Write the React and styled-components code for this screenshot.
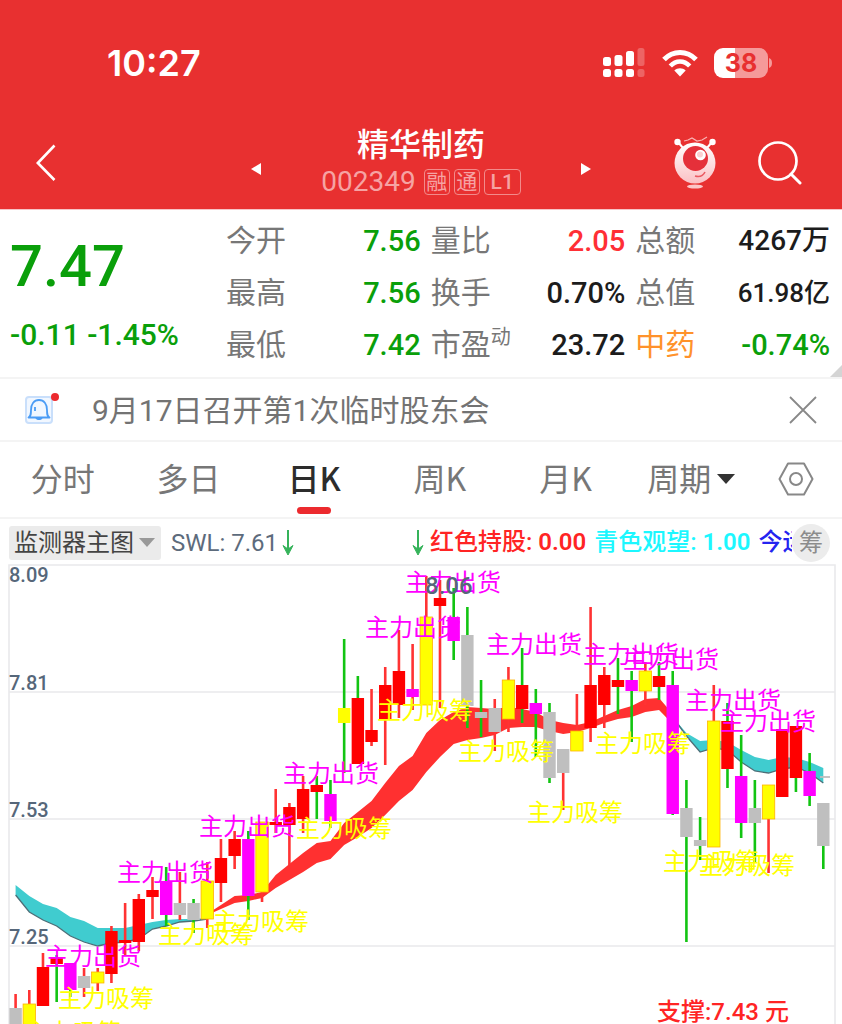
import React from "react";
import styled, { createGlobalStyle } from "styled-components";

const RED = "#ff0000";
const GREEN = "#12c412";
const YELLOW = "#ffff00";
const PINK = "#ff00ff";
const GREY = "#bfbfbf";
const UP = "#ff3333";

const STEP = 13.69;
const xAt = (i) => 15.6 + i * STEP;

// [body colour, body top, body bottom, wick top, wick bottom, wick colour]
const candles = [
  [GREY, 1008, 1030, 994, 1030, UP],
  [YELLOW, 1004, 1030, 990, 1030, UP],
  [RED, 967, 1006, 953, 1006, UP],
  [RED, 958, 964, 955, 1002, GREEN],
  [PINK, 963, 990, 963, 997, GREEN],
  [GREY, 976, 988, 968, 997, UP],
  [YELLOW, 972, 983, 968, 991, UP],
  [RED, 931, 974, 926, 983, UP],
  [RED, 940, 943, 903, 955, UP],
  [RED, 899, 942, 894, 951, UP],
  [RED, 890, 897, 877, 919, UP],
  [PINK, 881, 915, 867, 926, GREEN],
  [GREY, 903, 915, 872, 920, UP],
  [GREY, 903, 920, 899, 933, GREEN],
  [YELLOW, 881, 919, 862, 928, UP],
  [RED, 858, 883, 839, 902, UP],
  [RED, 839, 856, 831, 869, UP],
  [PINK, 839, 896, 831, 920, GREEN],
  [YELLOW, 822, 892, 822, 902, UP],
  [RED, 822, 825, 789, 833, UP],
  [RED, 807, 825, 803, 865, UP],
  [RED, 789, 819, 776, 833, UP],
  [RED, 785, 792, 776, 819, GREEN],
  [PINK, 794, 821, 780, 828, GREEN],
  [YELLOW, 708, 723, 639, 773, GREEN],
  [RED, 698, 764, 676, 764, GREEN],
  [RED, 730, 742, 689, 746, UP],
  [RED, 685, 719, 667, 765, UP],
  [RED, 671, 705, 630, 718, UP],
  [PINK, 689, 697, 644, 710, UP],
  [YELLOW, 617, 705, 576, 705, UP],
  [RED, 598, 606, 580, 708, UP],
  [PINK, 617, 641, 588, 660, GREEN],
  [GREY, 635, 706, 607, 728, GREEN],
  [GREY, 712, 718, 680, 737, GREEN],
  [GREY, 708, 732, 699, 751, UP],
  [YELLOW, 680, 719, 667, 732, UP],
  [RED, 685, 709, 648, 723, GREEN],
  [PINK, 703, 714, 689, 757, GREEN],
  [GREY, 712, 778, 703, 783, GREEN],
  [GREY, 749, 773, 749, 810, UP],
  [YELLOW, 731, 751, 694, 751, UP],
  [RED, 685, 728, 607, 742, UP],
  [RED, 675, 705, 667, 728, UP],
  [RED, 680, 687, 658, 714, GREEN],
  [PINK, 680, 691, 671, 742, GREEN],
  [YELLOW, 671, 691, 662, 705, UP],
  [RED, 676, 687, 662, 700, GREEN],
  [PINK, 685, 814, 671, 815, GREEN],
  [GREY, 808, 837, 780, 942, GREEN],
  [GREY, 840, 846, 817, 860, GREEN],
  [YELLOW, 721, 847, 685, 847, UP],
  [RED, 721, 769, 703, 788, GREEN],
  [PINK, 776, 823, 735, 838, GREEN],
  [GREY, 808, 823, 780, 862, GREEN],
  [YELLOW, 785, 819, 785, 873, UP],
  [RED, 729, 797, 729, 797, UP],
  [RED, 726, 778, 726, 792, GREEN],
  [PINK, 771, 796, 753, 806, GREEN],
  [GREY, 803, 846, 803, 869, GREEN],
];

// moving average bands: first candle index, then upper and lower edges
const bands = [
  {
    start: 0,
    color: "#40cccf",
    edge: "#4d6f78",
    top: [885, 896, 904, 908, 917, 921, 928, 928, 928, 925, 922, 920, 919, 919, 918],
    bottom: [895, 912, 920, 926, 936, 942, 946, 943, 942, 939, 929, 926, 922, 921, 919],
  },
  {
    start: 14,
    color: "#ff3030",
    top: [
      914, 905, 896, 895, 892, 875, 864, 853, 843, 841, 823, 812, 801, 783, 766, 756, 733, 720,
      712, 707, 708, 709, 707, 709, 712, 720, 723, 725, 722, 716, 710, 706, 699, 698, 714,
    ],
    bottom: [
      915, 909, 903, 901, 898, 888, 880, 872, 863, 859, 845, 837, 828, 815, 801, 790, 772, 757,
      744, 740, 738, 735, 728, 727, 727, 731, 734, 732, 728, 723, 719, 717, 712, 710, 724,
    ],
  },
  {
    start: 48,
    color: "#40cccf",
    edge: "#4d6f78",
    top: [717, 733, 741, 740, 742, 750, 757, 760, 757, 758, 762, 768],
    bottom: [717, 736, 752, 748, 750, 762, 771, 773, 769, 767, 773, 783],
  },
];

const sellMarks = [
  [405, 591], [365, 636], [486, 653], [583, 663], [623, 668], [685, 709],
  [720, 730], [283, 782], [199, 835], [117, 881], [45, 965],
];

const buyMarks = [
  [377, 719], [458, 760], [595, 752], [527, 821], [296, 837], [663, 870],
  [699, 874], [213, 930], [158, 943], [58, 1007], [25, 1041],
];

const levels = [
  ["8.09", 582],
  ["7.81", 690],
  ["7.53", 817],
  ["7.25", 944],
];

const quotes = [
  { label: "今开", value: "7.56", color: "#0a9f0a" },
  { label: "量比", value: "2.05", color: "#ff2f35" },
  { label: "总额", value: "4267万", size: 28 },
  { label: "最高", value: "7.56", color: "#0a9f0a" },
  { label: "换手", value: "0.70%" },
  { label: "总值", value: "61.98亿", size: 26 },
  { label: "最低", value: "7.42", color: "#0a9f0a" },
  { label: "市盈", note: "动", value: "23.72" },
  { label: "中药", labelColor: "#ff922b", value: "-0.74%", color: "#0a9f0a" },
];

const tabs = ["分时", "多日", "日K", "周K", "月K"];

const points = (list, start) => list.map((y, i) => `${xAt(start + i)},${y}`);

const Band = ({ start, color, edge, top, bottom }) => (
  <g>
    <polygon
      points={[...points(top, start), ...points(bottom, start).reverse()].join(" ")}
      fill={color}
    />
    {edge && (
      <polyline points={points(bottom, start).join(" ")} fill="none" stroke={edge} strokeWidth="1.3" />
    )}
  </g>
);

const Candle = ({ index, data }) => {
  const [fill, top, bottom, high, low, wick] = data;
  const x = xAt(index);
  return (
    <g>
      <line x1={x} x2={x} y1={high} y2={low} stroke={wick} strokeWidth="2.6" />
      <rect x={x - 6.2} y={top} width="12.4" height={bottom - top} fill={fill} />
      {fill === YELLOW && wick === UP && (
        <rect x={x - 6.2} y={top} width="12.4" height={bottom - top} fill="none" stroke="#ffb300" strokeWidth="0.8" />
      )}
    </g>
  );
};

const Chart = () => (
  <ChartSvg viewBox="0 564 842 460" role="img" aria-label="日K">
    <path d="M9 1030V565H835V1030M9 692H835M9 819H835M9 946H835" fill="none" stroke="#e9e9ec" strokeWidth="1.6" />
    {bands.map((band) => (
      <Band key={band.start} {...band} />
    ))}
    {candles.map((data, i) => (
      <Candle key={i} index={i} data={data} />
    ))}
    <path d="M820 777H830" stroke={GREY} strokeWidth="1.8" />
    {levels.map(([text, y]) => (
      <AxisText key={text} x="9" y={y}>{text}</AxisText>
    ))}
    {sellMarks.map(([x, y]) => (
      <Mark key={x} x={x} y={y} fill={PINK}>主力出货</Mark>
    ))}
    {buyMarks.map(([x, y]) => (
      <Mark key={x} x={x} y={y} fill={YELLOW}>主力吸筹</Mark>
    ))}
    <PeakText x="425" y="594">8.06</PeakText>
    <Support x="657" y="1020">支撑:7.43 元</Support>
  </ChartSvg>
);

const Arrow = () => (
  <svg width="12" height="26" viewBox="0 0 12 26">
    <path d="M6 0V20" stroke="#35b35a" strokeWidth="2" />
    <path d="M1 15.5L6 25L11 15.5L6 19Z" fill="#35b35a" stroke="#35b35a" />
  </svg>
);

const App = () => {
  return (
    <Page>
      <GlobalStyle />
      <Header>
        <StatusBar>
          <Clock>10:27</Clock>
          <StatusIcons>
            <svg width="43" height="30" viewBox="0 0 43 30">
              <g fill="#fff">
                <rect x="0" y="9" width="8" height="9" rx="2.5" />
                <rect x="11.5" y="7" width="8" height="11" rx="2.5" />
                <rect x="23" y="3" width="8" height="15" rx="2.5" />
                <rect x="0" y="21" width="8" height="8" rx="2.5" />
                <rect x="11.5" y="21" width="8" height="8" rx="2.5" />
                <rect x="23" y="21" width="8" height="8" rx="2.5" />
              </g>
              <g fill="#fff" opacity=".25">
                <rect x="34.5" y="0" width="7" height="18" rx="2.5" />
                <rect x="34.5" y="21" width="7" height="8" rx="2.5" />
              </g>
            </svg>
            <svg width="36" height="28" viewBox="0 0 36 28">
              <path d="M2 10.5C11 1 25 1 34 10.5" fill="none" stroke="#fff" strokeWidth="5" />
              <path d="M8.3 17C14 11 22 11 27.7 17" fill="none" stroke="#fff" strokeWidth="4.6" />
              <path d="M12.3 21.5C15.5 18.4 20.5 18.4 23.7 21.5L18 27.4Z" fill="#fff" />
            </svg>
            <Battery>
              <Charge>38</Charge>
              <svg width="4" height="10" viewBox="0 0 4 10">
                <path d="M0 0C4 1 4 9 0 10Z" fill="#f59a9a" />
              </svg>
            </Battery>
          </StatusIcons>
        </StatusBar>
        <NavBar>
          <IconButton aria-label="返回">
            <svg width="20" height="38" viewBox="0 0 20 38">
              <path d="M18.5 1.5L1.8 19L18.5 36" fill="none" stroke="#fff" strokeWidth="2.6" />
            </svg>
          </IconButton>
          <Switcher>
            <IconButton aria-label="上一只">
              <svg width="10" height="12" viewBox="0 0 10 12">
                <path d="M10 0V12L0 6Z" fill="#fff" />
              </svg>
            </IconButton>
            <Stock>
              <StockName>精华制药</StockName>
              <StockCode>
                002349
                <Badges>
                  <Badge>融</Badge>
                  <Badge>通</Badge>
                  <Badge $wide>L1</Badge>
                </Badges>
              </StockCode>
            </Stock>
            <IconButton aria-label="下一只">
              <svg width="10" height="12" viewBox="0 0 10 12">
                <path d="M0 0V12L10 6Z" fill="#fff" />
              </svg>
            </IconButton>
          </Switcher>
          <Actions>
            <IconButton aria-label="助手">
              <svg width="44" height="54" viewBox="0 0 44 54">
                <defs>
                  <linearGradient id="body" x1="0" y1="0" x2="0" y2="1">
                    <stop offset="0" stopColor="#fff" />
                    <stop offset="1" stopColor="#fbc0c4" />
                  </linearGradient>
                </defs>
                <path d="M5 6L10 12M39 6L34 12" stroke="#fff" strokeWidth="2" />
                <circle cx="4.5" cy="6" r="3.2" fill="#fff" />
                <circle cx="39.5" cy="6" r="3.2" fill="#fff" />
                <path d="M11 5L15 4L19 2L24 5L29 4L34 1" fill="none" stroke="#f9b4b4" strokeWidth="1.2" />
                <circle cx="22" cy="27" r="20.5" fill="url(#body)" />
                <circle cx="22.5" cy="22.5" r="12.5" fill="#e5303a" />
                <circle cx="27.5" cy="19" r="5.3" fill="#fff" />
                <circle cx="27" cy="18.5" r="3" fill="#fbd0d2" />
                <path d="M22 40Q29 42 32 36" fill="none" stroke="#ea5a62" strokeWidth="1.6" />
                <ellipse cx="22" cy="50.5" rx="8" ry="2" fill="#fbc6c8" />
              </svg>
            </IconButton>
            <IconButton aria-label="搜索">
              <svg width="44" height="44" viewBox="0 0 44 44">
                <circle cx="20" cy="20" r="18.5" fill="none" stroke="#fff" strokeWidth="2.7" />
                <path d="M33 33L42 42" stroke="#fff" strokeWidth="3" strokeLinecap="round" />
              </svg>
            </IconButton>
          </Actions>
        </NavBar>
      </Header>

      <Quote>
        <PriceBlock>
          <Price>7.47</Price>
          <Change>-0.11 -1.45%</Change>
        </PriceBlock>
        <QuoteGrid>
          {quotes.map(({ label, note, value, color, labelColor, size }) => (
            <QuoteItem key={label}>
              <QuoteLabel $color={labelColor}>
                {label}
                {note && <sup>{note}</sup>}
              </QuoteLabel>
              <QuoteValue $color={color} $size={size}>{value}</QuoteValue>
            </QuoteItem>
          ))}
        </QuoteGrid>
        <Corner />
      </Quote>

      <Notice>
        <Bell>
          <svg width="24" height="24" viewBox="0 0 24 24" fill="none" stroke="#4b9cf5" strokeWidth="1.8">
            <path d="M1.5 19.5H22.5C20 18 20 16 20 12C20 6 17 2 12 2S4 6 4 12C4 16 4 18 1.5 19.5Z" strokeLinejoin="round" />
            <path d="M8.5 20C9 22.8 15 22.8 15.5 20Z" fill="#4b9cf5" stroke="none" />
            <path d="M8 9V13" />
          </svg>
        </Bell>
        <NoticeText href="#notice">9月17日召开第1次临时股东会</NoticeText>
        <IconButton aria-label="关闭">
          <svg width="28" height="28" viewBox="0 0 28 28">
            <path d="M1 1L27 27M27 1L1 27" stroke="#888" strokeWidth="1.8" />
          </svg>
        </IconButton>
      </Notice>

      <Tabs>
        {tabs.map((tab) => (
          <Tab key={tab} $active={tab === "日K"}>{tab}</Tab>
        ))}
        <Tab>
          周期
          <Caret width="18" height="10" viewBox="0 0 18 10">
            <path d="M0 0H18L9 10Z" fill="#333" />
          </Caret>
        </Tab>
        <Tab aria-label="设置">
          <Caret width="36" height="34" viewBox="0 0 36 34" fill="none" stroke="#888" strokeWidth="2">
            <path d="M10 1.5H26L34.5 17L26 32.5H10L1.5 17Z" strokeLinejoin="round" />
            <circle cx="18" cy="17" r="6" />
          </Caret>
        </Tab>
      </Tabs>

      <Indicators>
        <Picker>
          <select aria-label="指标">
            <option>监测器主图</option>
          </select>
          <svg width="16" height="9" viewBox="0 0 16 9">
            <path d="M0 0H16L8 9Z" fill="#999" />
          </svg>
        </Picker>
        <Swl>
          SWL: 7.61
          <Arrow />
        </Swl>
        <Signals>
          <Arrow />
          <Signal $color="#ff2424">红色持股: <b>0.00</b></Signal>
          <Signal $color="#1cf7ff">青色观望: <b>1.00</b></Signal>
          <Signal $color="#2424f0">今运</Signal>
        </Signals>
        <Chip>筹</Chip>
      </Indicators>

      <Chart />
    </Page>
  );
};

export default App;

const GlobalStyle = createGlobalStyle`
  * {
    box-sizing: border-box;
  }

  body {
    margin: 0;
    background: #fff;
    font-family: Roboto, "Noto Sans CJK SC", sans-serif;
  }

  button, select {
    font-family: inherit;
  }

  svg {
    display: block;
    flex-shrink: 0;
  }
`;

const Page = styled.main`
  overflow: hidden;
  background: #fff;
`;

const Header = styled.header`
  color: white;
  background-color: #e83030;
  border-bottom: 1px solid #f7c4c6;
`;

const StatusBar = styled.div`
  display: flex;
  align-items: center;
  justify-content: space-between;
  height: 114px;
  padding: 12px 69px 0 107px;
`;

const Clock = styled.div`
  font-family: Inter, sans-serif;
  font-size: 36px;
  font-weight: 600;
`;

const StatusIcons = styled.div`
  display: flex;
  align-items: center;
  gap: 16px;
`;

const Battery = styled.div`
  display: flex;
  align-items: center;
  gap: 1px;
`;

const Charge = styled.div`
  width: 54px;
  height: 30px;
  border-radius: 9px;
  background: linear-gradient(90deg, #fff 38%, #f59a9a 38%);
  color: #e83030;
  font: 700 25px/30px Inter, sans-serif;
  text-align: center;
`;

const NavBar = styled.nav`
  display: grid;
  grid-template-columns: 1fr 344px 1fr;
  align-items: center;
  height: 95px;
  padding: 0 40px 0 36px;
`;

const IconButton = styled.button`
  display: flex;
  align-items: center;
  padding: 0;
  border: 0;
  background: none;
  cursor: pointer;
`;

const Switcher = styled.div`
  display: flex;
  align-items: center;
  justify-content: space-between;
  padding: 12px 0 0 4px;
`;

const Stock = styled.div`
  display: flex;
  flex-direction: column;
  align-items: center;
  padding-bottom: 12px;
`;

const StockName = styled.h1`
  margin: 0;
  font-size: 32px;
  font-weight: 500;
  line-height: 38px;
`;

const StockCode = styled.div`
  display: flex;
  align-items: center;
  gap: 8px;
  color: #f6a3a3;
  font-size: 28px;
  line-height: 36px;
`;

const Badges = styled.div`
  display: flex;
  gap: 4px;
`;

const Badge = styled.span`
  width: ${(props) => (props.$wide ? 37 : 26)}px;
  height: 26px;
  border: 1px solid #f28a8a;
  border-radius: 4px;
  font-size: 21px;
  font-weight: ${(props) => (props.$wide ? 500 : 400)};
  line-height: 24px;
  text-align: center;
`;

const Actions = styled.div`
  display: flex;
  align-items: center;
  justify-content: flex-end;
  gap: 41px;
`;

const Quote = styled.section`
  position: relative;
  display: grid;
  grid-template-columns: 216px 1fr;
  padding: 5px 12px 6px 10px;
  border-bottom: 2px solid #f4f4f4;
`;

const PriceBlock = styled.div`
  color: #0a9f0a;
`;

const Price = styled.div`
  padding-top: 16px;
  font-size: 58px;
  font-weight: 500;
  line-height: 70px;
`;

const Change = styled.div`
  padding-top: 16px;
  font-size: 30px;
  font-weight: 500;
  line-height: 36px;
  white-space: nowrap;
`;

const QuoteGrid = styled.dl`
  display: grid;
  grid-template-columns: repeat(3, 1fr);
  column-gap: 10px;
  margin: 0;
`;

const QuoteItem = styled.div`
  display: flex;
  align-items: center;
  justify-content: space-between;
  height: 52px;
  white-space: nowrap;
`;

const QuoteLabel = styled.dt`
  color: ${(props) => props.$color || "#777"};
  font-size: 30px;
  line-height: 36px;

  sup {
    font-size: 20px;
    line-height: 0;
  }
`;

const QuoteValue = styled.dd`
  margin: 0;
  color: ${(props) => props.$color || "#1c1c1c"};
  font-size: ${(props) => props.$size || 29}px;
  font-weight: 500;
  line-height: 36px;
`;

const Corner = styled.span`
  position: absolute;
  right: 0;
  bottom: 0;
  border: 6px solid transparent;
  border-right-color: #d4d4d4;
  border-bottom-color: #d4d4d4;
`;

const Notice = styled.section`
  display: flex;
  align-items: center;
  height: 63px;
  padding: 0 25px;
  border-bottom: 2px solid #f4f4f4;
`;

const Bell = styled.span`
  position: relative;
  display: flex;
  align-items: center;
  justify-content: center;
  width: 28px;
  height: 28px;
  border: 2px solid #c9dffb;
  border-radius: 4px;
  background: #f1f7ff;

  &::after {
    content: "";
    position: absolute;
    top: -5px;
    right: -8px;
    width: 8px;
    height: 8px;
    border-radius: 50%;
    background: #ec2a2e;
  }
`;

const NoticeText = styled.a`
  flex: 1;
  padding: 0 0 4px 39px;
  color: #737373;
  font-size: 30px;
  text-decoration: none;
`;

const Tabs = styled.nav`
  display: grid;
  grid-template-columns: repeat(6, 3fr) 2fr;
  height: 77px;
  padding-right: 4px;
  border-bottom: 2px solid #f4f4f4;
`;

const Tab = styled.button`
  position: relative;
  display: flex;
  align-items: center;
  justify-content: center;
  gap: 6px;
  padding: 0 0 6px;
  border: 0;
  background: none;
  color: ${(props) => (props.$active ? "#2c2c2c" : "#777")};
  font-family: "Noto Sans CJK SC", sans-serif;
  font-size: 32px;
  font-weight: ${(props) => (props.$active ? 500 : 400)};

  &::after {
    content: "";
    display: ${(props) => (props.$active ? "block" : "none")};
    position: absolute;
    bottom: 3px;
    width: 34px;
    height: 7px;
    border-radius: 4px;
    background: #ec2a2e;
  }
`;

const Caret = styled.svg`
  margin-top: 4px;
`;

const Indicators = styled.section`
  display: flex;
  align-items: center;
  height: 45px;
  padding: 2px 12px 0 9px;
  font-size: 24px;
  white-space: nowrap;
`;

const Picker = styled.label`
  display: flex;
  flex-shrink: 0;
  align-items: center;
  width: 152px;
  height: 34px;
  padding: 0 6px 0 5px;
  border-radius: 3px;
  background: #ebebeb;

  select {
    flex: 1;
    min-width: 0;
    padding: 0;
    border: 0;
    appearance: none;
    background: none;
    color: #444;
    font-size: 24px;
  }
`;

const Swl = styled.div`
  display: flex;
  flex-shrink: 0;
  align-items: center;
  gap: 4px;
  width: 251px;
  padding-left: 10px;
  color: #5d6b7c;
`;

const Signals = styled.div`
  display: flex;
  flex: 1;
  align-items: center;
  gap: 8px;
  min-width: 0;
  overflow: hidden;
  line-height: 32px;

  svg {
    margin-right: -2px;
  }
`;

const Signal = styled.span`
  padding-bottom: 2px;
  color: ${(props) => props.$color};
  font-weight: 500;

  b {
    font-weight: 600;
  }
`;

const Chip = styled.button`
  flex-shrink: 0;
  width: 38px;
  height: 38px;
  padding: 0;
  border: 0;
  border-radius: 50%;
  background: #ececec;
  color: #8c8c8c;
  font-size: 24px;
  line-height: 38px;
`;

const ChartSvg = styled.svg`
  width: 100%;
  height: auto;
`;

const AxisText = styled.text`
  fill: #56677a;
  font-size: 20px;
  font-weight: 500;
`;

const PeakText = styled.text`
  fill: #56677a;
  font-size: 24px;
  font-weight: 500;
`;

const Mark = styled.text`
  font-size: 24px;
`;

const Support = styled.text`
  fill: #ff2424;
  font-size: 24px;
  font-weight: 500;
`;
